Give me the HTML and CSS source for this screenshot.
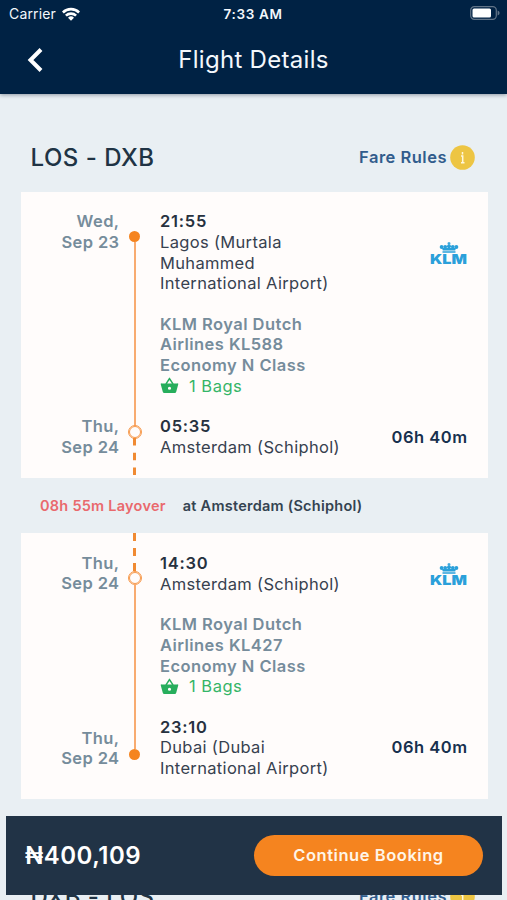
FILE: index.html
```html
<!DOCTYPE html>
<html lang="en">
<head>
<meta charset="utf-8">
<title>Flight Details</title>
<link rel="stylesheet" href="styles.css">
</head>
<body>
<svg width="0" height="0" class="defs" aria-hidden="true">
  <symbol id="basket" viewBox="0 0 24 22">
    <path fill-rule="evenodd" d="M17.200 8 12.800 1.400a1 1 0 0 0-1.700 0L6.800 8H2a1 1 0 0 0-1 1.300l2.500 9.200A2 2 0 0 0 5.500 20h13a2 2 0 0 0 2-1.500L23 9.300A1 1 0 0 0 22 8zM9 8l3-4.400L15 8zm3 8.200a2 2 0 1 1 0-4 2 2 0 0 1 0 4z"/>
  </symbol>
  <symbol id="crown" viewBox="0 0 20 11">
    <path d="M3.500 9.300h13v1.500h-13zM3 6h14l-.8 2.500H3.800zM9.400 0h1.200v3H9.400zM8.500.7h3v1.100h-3z"/>
    <circle cx="2.600" cy="5" r="1.900"/><circle cx="6.200" cy="4.800" r="1.900"/><circle cx="10" cy="4.300" r="2"/><circle cx="13.800" cy="4.800" r="1.900"/><circle cx="17.400" cy="5" r="1.900"/>
  </symbol>
</svg>
<div class="screen">
  <header class="header">
    <div class="status">
      <div class="carrier"><span>Carrier</span>
        <svg class="wifi" viewBox="0 0 18 14"><path d="M0 4.600a12.700 12.700 0 0 1 18 0l-1.800 1.900a10.200 10.200 0 0 0-14.400 0zM3 7.700a8.500 8.500 0 0 1 12 0l-1.800 1.900a6 6 0 0 0-8.400 0zM6 10.800a4.300 4.300 0 0 1 6 0L9 13.800z"/></svg>
      </div>
      <span class="clock">7:33 AM</span>
      <svg class="battery" viewBox="0 0 30 14"><rect x=".7" y=".7" width="25.600" height="12.600" rx="3.600" fill="none" stroke="#617488" stroke-width="1.200"/><rect x="2.500" y="2.500" width="18.500" height="9" rx="1.500" fill="#fff"/><path d="M27.600 4.500q2 .8 2 2.500t-2 2.500z" fill="#617488"/></svg>
    </div>
    <div class="nav">
      <svg class="back" viewBox="0 0 16 24"><path d="M14 1.500 3.500 12 14 22.500" fill="none" stroke="#fff" stroke-width="4"/></svg>
      <h1>Flight Details</h1>
    </div>
  </header>

  <main>
    <div class="route">
      <h2>LOS - DXB</h2>
      <div class="rules"><span>Fare Rules</span><svg viewBox="0 0 25 25"><circle cx="12.500" cy="12.500" r="12.300" fill="#edc543"/><path d="M12.500 7v2.400M11 11h1.700v6.300M11 17.800h3.500" fill="none" stroke="#fff8dc" stroke-width="1.500"/></svg></div>
    </div>

    <section class="card">
      <div class="dates"><p>Wed,<br>Sep 23</p><p>Thu,<br>Sep 24</p></div>
      <div class="track departing"><i class="dot"></i><i class="line"></i><i class="ring"></i><svg class="dashes" viewBox="0 0 3 37"><path d="M1.500 0v37" stroke-dasharray="7.500 7.200"/></svg></div>
      <div class="info">
        <p class="place"><b>21:55</b><br>Lagos (Murtala<br>Muhammed<br>International Airport)</p>
        <div class="flight"><p>KLM Royal Dutch<br>Airlines KL588<br>Economy N Class</p>
          <p class="bags"><svg><use href="#basket"/></svg><span>1 Bags</span></p></div>
        <p class="place"><b>05:35</b><br>Amsterdam (Schiphol)</p>
      </div>
      <div class="side"><div class="klm"><svg><use href="#crown"/></svg><span>KLM</span></div><strong>06h 40m</strong></div>
    </section>

    <div class="layover"><span class="wait">08h 55m Layover</span><span>at Amsterdam (Schiphol)</span></div>

    <section class="card second">
      <div class="dates"><p>Thu,<br>Sep 24</p><p>Thu,<br>Sep 24</p></div>
      <div class="track arriving"><svg class="dashes" viewBox="0 0 3 39"><path d="M1.500 0v39" stroke-dasharray="8 7"/></svg><i class="ring"></i><i class="line"></i><i class="dot"></i></div>
      <div class="info">
        <p class="place"><b>14:30</b><br>Amsterdam (Schiphol)</p>
        <div class="flight"><p>KLM Royal Dutch<br>Airlines KL427<br>Economy N Class</p>
          <p class="bags"><svg><use href="#basket"/></svg><span>1 Bags</span></p></div>
        <p class="place"><b>23:10</b><br>Dubai (Dubai<br>International Airport)</p>
      </div>
      <div class="side"><div class="klm"><svg><use href="#crown"/></svg><span>KLM</span></div><strong>06h 40m</strong></div>
    </section>

    <div class="route return">
      <h2>DXB - LOS</h2>
      <div class="rules"><span>Fare Rules</span><svg viewBox="0 0 25 25"><circle cx="12.500" cy="12.500" r="12.300" fill="#edc543"/><path d="M12.500 7v2.400M11 11h1.700v6.300M11 17.800h3.500" fill="none" stroke="#fff8dc" stroke-width="1.500"/></svg></div>
    </div>
  </main>

  <footer class="checkout"><span class="price">₦400,109</span><button>Continue Booking</button></footer>
</div>
</body>
</html>
```

FILE: styles.css
```css
* { box-sizing: border-box; }
body, h1, h2, p { margin: 0; }
body { font-family: Inter, "Liberation Sans", sans-serif; background: #e9eff3; }
.defs { position: absolute; }
.screen { position: relative; width: 507px; height: 900px; overflow: hidden; background: #e9eff3; }

.header { height: 94px; background: #002244; color: #f4f8fc; box-shadow: 0 1px 4px rgba(0, 20, 40, .4); }
.status { height: 27px; padding: 0 8px 0 9px; display: grid; grid-template-columns: 1fr auto 1fr; align-items: center; font-size: 14px; }
.carrier { display: flex; align-items: center; gap: 6px; letter-spacing: .15px; }
.wifi { width: 18px; height: 14px; fill: #fff; }
.clock { position: relative; left: -1px; font-size: 13.500px; font-weight: 600; letter-spacing: .65px; }
.battery { width: 30px; height: 14px; justify-self: end; position: relative; left: 1px; top: -1px; }
.nav { height: 66px; display: grid; grid-template-columns: 60px 1fr 60px; align-items: center; }
.back { width: 16px; height: 24px; margin-left: 27px; }
h1 { text-align: center; font-size: 24px; line-height: 30px; font-weight: 400; letter-spacing: .3px; }

.route { height: 98px; padding: 28px 32px 0 30.500px; display: flex; justify-content: space-between; align-items: flex-start; }
h2 { font-size: 24px; line-height: 71px; font-weight: 500; letter-spacing: .5px; color: #203344; }
.rules { height: 70px; display: flex; align-items: center; gap: 3px; font-size: 16.500px; font-weight: 600; color: #315c8c; letter-spacing: .5px; }
.rules svg { width: 25px; height: 25px; }

.card { width: 467px; height: 286px; margin-left: 20.500px; background: #fffcfb; display: grid; grid-template-columns: 99px 30px 187px 1fr; font-size: 16.500px; line-height: 20.750px; letter-spacing: .33px; color: #37414f; }
.second { height: 266px; }
.dates { padding: 19px 0 20.500px; display: flex; flex-direction: column; justify-content: space-between; text-align: right; font-weight: 600; letter-spacing: .4px; color: #768c9b; }
.second .dates { padding-top: 19.500px; padding-bottom: 30px; }
.track { display: flex; flex-direction: column; align-items: center; }
.departing { padding: 38.500px 0 3px; }
.arriving { padding-bottom: 39px; }
.dot { width: 11px; height: 11px; border-radius: 50%; background: #f5841f; }
.line { width: 2px; flex: 1; background: #f8ab70; }
.ring { width: 12px; height: 12px; border-radius: 50%; border: 1.500px solid #f79a4d; outline: .25px solid #f79a4d; background: #fffcfb; }
.dashes { width: 3px; height: 37px; margin-right: 1px; }
.arriving .dashes { height: 39px; }
.dashes path { stroke: #f08a32; stroke-width: 3px; }
.info { padding: 19px 0 20px 10.500px; display: flex; flex-direction: column; gap: 19.500px; white-space: nowrap; }
.second .info { padding-top: 20px; padding-bottom: 19px; }
.place b { font-weight: 600; color: #27313f; letter-spacing: .75px; }
.flight { font-weight: 600; color: #768c9b; letter-spacing: .45px; }
.bags { display: flex; align-items: center; gap: 10px; font-weight: 400; letter-spacing: .5px; color: #35b568; }
.bags svg { width: 19px; height: 17.500px; fill: #27ae5c; }
.side { padding: 49.500px 20px 30px 0; display: flex; flex-direction: column; justify-content: space-between; align-items: flex-end; }
.second .side { padding: 29.500px 20px 41px 0; }
.side strong { font-weight: 600; letter-spacing: .5px; color: #17304e; }
.klm { display: flex; flex-direction: column; align-items: center; color: #2ba0da; }
.klm svg { width: 20px; height: 11px; fill: #2ba0da; }
.klm span { width: 38px; font-size: 13.500px; line-height: 13px; font-weight: 900; letter-spacing: 0; transform: scaleX(1.200); transform-origin: 0 50%; }

.layover { height: 55px; padding-left: 40px; display: flex; align-items: center; gap: 17px; font-size: 14.500px; font-weight: 600; letter-spacing: .25px; color: #344351; }
.wait { color: #e9696d; }
.return { padding-top: 62px; height: 133px; }

.checkout { position: absolute; left: 6px; top: 816px; width: 496px; height: 79px; padding: 0 19px; display: flex; align-items: center; justify-content: space-between; background: #213346; }
.price { font-size: 24px; font-weight: 600; letter-spacing: .5px; color: #fff; }
button { width: 229px; height: 41px; padding: 0 0 2px; border: 0; border-radius: 21px; background: #f5841f; color: #fff5e7; font: 600 16.500px Inter, "Liberation Sans", sans-serif; letter-spacing: .55px; }
```
